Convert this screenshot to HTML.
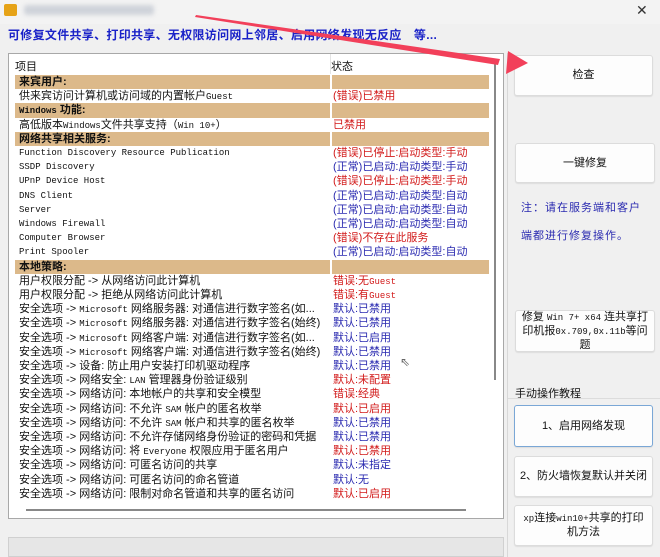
<!DOCTYPE html>
<html><head><meta charset="utf-8"><style>
*{margin:0;padding:0;box-sizing:border-box}
body{width:660px;height:557px;background:#f0f0f0;position:relative;overflow:hidden;font-family:"Liberation Sans","Noto Sans CJK SC",sans-serif;font-size:11px;color:#111}
.abs{position:absolute}
.e{font-family:"Liberation Mono","Noto Sans CJK SC",monospace;font-size:9px}
#list{left:8px;top:53px;width:496px;height:466px;border:1px solid #a8a8a8;background:#fff}
.row{position:absolute;left:3px;width:474px;height:14.2px;line-height:14px;white-space:nowrap}
.row .a{position:absolute;left:4px}
.row .b{position:absolute;left:318px}
.band{background:#dcb98a;font-weight:bold}
.band::after{content:"";position:absolute;left:315px;top:0;width:2px;height:100%;background:#fff}
.r{color:#d21a1a}.bl{color:#2a2ab0}
.btn{position:absolute;background:#fdfdfd;border:1px solid #dcdcdc;border-radius:3px;text-align:center;display:flex;align-items:center;justify-content:center;font-size:11px;line-height:13px;box-shadow:0 1px 1px rgba(0,0,0,.08)}
</style></head><body>
<div class="abs" style="left:0;top:0;width:660px;height:24px;background:#f3f3f3"></div>
<div class="abs" style="left:4px;top:4px;width:13px;height:12px;background:#e6a318;border-radius:2px"></div>
<div class="abs" style="left:24px;top:5px;width:130px;height:10px;background:#cfd3da;filter:blur(2px);border-radius:3px"></div>
<div class="abs" style="left:636px;top:2px;font-size:14px;color:#333">✕</div>
<div class="abs" style="left:8px;top:26px;color:#1a22c8;font-weight:bold;font-size:12px;letter-spacing:0.3px">可修复文件共享、打印共享、无权限访问网上邻居、启用网络发现无反应　等...</div>

<div id="list" class="abs">
 <div class="abs" style="left:6px;top:4px">项目</div>
 <div class="abs" style="left:322px;top:4px">状态</div>
 <div class="abs" style="left:321px;top:0;width:1px;height:20px;background:#e4e4e4"></div>
 <div class="abs" style="left:3px;top:21px;width:474px;height:427px">
 <div class="row band" style="top:0"><span class="a">来宾用户:</span></div>
 <div class="row" style="top:14.2px"><span class="a">供来宾访问计算机或访问域的内置帐户<span class="e">Guest</span></span><span class="b r">(错误)已禁用</span></div>
 <div class="row band" style="top:28.4px"><span class="a"><span class="e" style="font-weight:bold">Windows</span> 功能:</span></div>
 <div class="row" style="top:42.6px"><span class="a">高低版本<span class="e">Windows</span>文件共享支持（<span class="e">Win 10+</span>）</span><span class="b r">已禁用</span></div>
 <div class="row band" style="top:56.8px"><span class="a">网络共享相关服务:</span></div>
 <div class="row" style="top:71px"><span class="a e">Function Discovery Resource Publication</span><span class="b r">(错误)已停止:启动类型:手动</span></div>
 <div class="row" style="top:85.2px"><span class="a e">SSDP Discovery</span><span class="b bl">(正常)已启动:启动类型:手动</span></div>
 <div class="row" style="top:99.4px"><span class="a e">UPnP Device Host</span><span class="b r">(错误)已停止:启动类型:手动</span></div>
 <div class="row" style="top:113.6px"><span class="a e">DNS Client</span><span class="b bl">(正常)已启动:启动类型:自动</span></div>
 <div class="row" style="top:127.8px"><span class="a e">Server</span><span class="b bl">(正常)已启动:启动类型:自动</span></div>
 <div class="row" style="top:142px"><span class="a e">Windows Firewall</span><span class="b bl">(正常)已启动:启动类型:自动</span></div>
 <div class="row" style="top:156.2px"><span class="a e">Computer Browser</span><span class="b r">(错误)不存在此服务</span></div>
 <div class="row" style="top:170.4px"><span class="a e">Print Spooler</span><span class="b bl">(正常)已启动:启动类型:自动</span></div>
 <div class="row band" style="top:184.6px"><span class="a">本地策略:</span></div>
 <div class="row" style="top:198.8px"><span class="a">用户权限分配 -&gt; 从网络访问此计算机</span><span class="b r">错误:无<span class="e">Guest</span></span></div>
 <div class="row" style="top:213px"><span class="a">用户权限分配 -&gt; 拒绝从网络访问此计算机</span><span class="b r">错误:有<span class="e">Guest</span></span></div>
 <div class="row" style="top:227.2px"><span class="a">安全选项 -&gt; <span class="e">Microsoft</span> 网络服务器: 对通信进行数字签名(如...</span><span class="b bl">默认:已禁用</span></div>
 <div class="row" style="top:241.4px"><span class="a">安全选项 -&gt; <span class="e">Microsoft</span> 网络服务器: 对通信进行数字签名(始终)</span><span class="b bl">默认:已禁用</span></div>
 <div class="row" style="top:255.6px"><span class="a">安全选项 -&gt; <span class="e">Microsoft</span> 网络客户端: 对通信进行数字签名(如...</span><span class="b bl">默认:已启用</span></div>
 <div class="row" style="top:269.8px"><span class="a">安全选项 -&gt; <span class="e">Microsoft</span> 网络客户端: 对通信进行数字签名(始终)</span><span class="b bl">默认:已禁用</span></div>
 <div class="row" style="top:284px"><span class="a">安全选项 -&gt; 设备: 防止用户安装打印机驱动程序</span><span class="b bl">默认:已禁用</span></div>
 <div class="row" style="top:298.2px"><span class="a">安全选项 -&gt; 网络安全: <span class="e">LAN</span> 管理器身份验证级别</span><span class="b r">默认:未配置</span></div>
 <div class="row" style="top:312.4px"><span class="a">安全选项 -&gt; 网络访问: 本地帐户的共享和安全模型</span><span class="b r">错误:经典</span></div>
 <div class="row" style="top:326.6px"><span class="a">安全选项 -&gt; 网络访问: 不允许 <span class="e">SAM</span> 帐户的匿名枚举</span><span class="b r">默认:已启用</span></div>
 <div class="row" style="top:340.8px"><span class="a">安全选项 -&gt; 网络访问: 不允许 <span class="e">SAM</span> 帐户和共享的匿名枚举</span><span class="b bl">默认:已禁用</span></div>
 <div class="row" style="top:355px"><span class="a">安全选项 -&gt; 网络访问: 不允许存储网络身份验证的密码和凭据</span><span class="b bl">默认:已禁用</span></div>
 <div class="row" style="top:369.2px"><span class="a">安全选项 -&gt; 网络访问: 将 <span class="e">Everyone</span> 权限应用于匿名用户</span><span class="b r">默认:已禁用</span></div>
 <div class="row" style="top:383.4px"><span class="a">安全选项 -&gt; 网络访问: 可匿名访问的共享</span><span class="b bl">默认:未指定</span></div>
 <div class="row" style="top:397.6px"><span class="a">安全选项 -&gt; 网络访问: 可匿名访问的命名管道</span><span class="b bl">默认:无</span></div>
 <div class="row" style="top:411.8px"><span class="a">安全选项 -&gt; 网络访问: 限制对命名管道和共享的匿名访问</span><span class="b r">默认:已启用</span></div>
 </div>
 <div class="abs" style="left:485px;top:6px;width:2px;height:320px;background:#888"></div>
 <div class="abs" style="left:17px;top:455px;width:440px;height:2px;background:#888"></div>
</div>
<div class="abs" style="left:8px;top:537px;width:496px;height:20px;background:#e6e6e6;border:1px solid #d0d0d0"></div>
<div class="abs" style="left:507px;top:53px;width:1px;height:504px;background:#d8d8d8"></div>

<div class="btn" style="left:514px;top:55px;width:139px;height:41px">检查</div>
<div class="btn" style="left:515px;top:143px;width:140px;height:40px">一键修复</div>
<div class="abs" style="left:521px;top:194px;color:#2a2ab0;line-height:28px;font-size:11px;letter-spacing:1px">注：请在服务端和客户<br>端都进行修复操作。</div>
<div class="btn" style="left:515px;top:310px;width:140px;height:42px;padding:0 2px"><span>修复 <span class="e">Win 7+ x64</span> 连共享打印机报<span class="e">0x.709,0x.11b</span>等问题</span></div>
<div class="abs" style="left:515px;top:385px">手动操作教程</div>
<div class="abs" style="left:508px;top:398px;width:152px;height:1px;background:#dcdcdc"></div>
<div class="btn" style="left:514px;top:405px;width:139px;height:42px;border-color:#7aa7d6">1、启用网络发现</div>
<div class="btn" style="left:514px;top:456px;width:139px;height:41px">2、防火墙恢复默认并关闭</div>
<div class="btn" style="left:514px;top:505px;width:139px;height:41px;padding:0 4px"><span><span class="e">xp</span>连接<span class="e">win10+</span>共享的打印机方法</span></div>

<svg class="abs" style="left:0;top:0" width="660" height="557">
<polygon points="195,17 196,15 500,59 498,65" fill="#f2405a"/>
<polygon points="508,51 528,63 506,74" fill="#f2405a"/>
</svg>
<div class="abs" style="left:400px;top:355px;font-size:12px;color:#666">⇖</div>
</body></html>
